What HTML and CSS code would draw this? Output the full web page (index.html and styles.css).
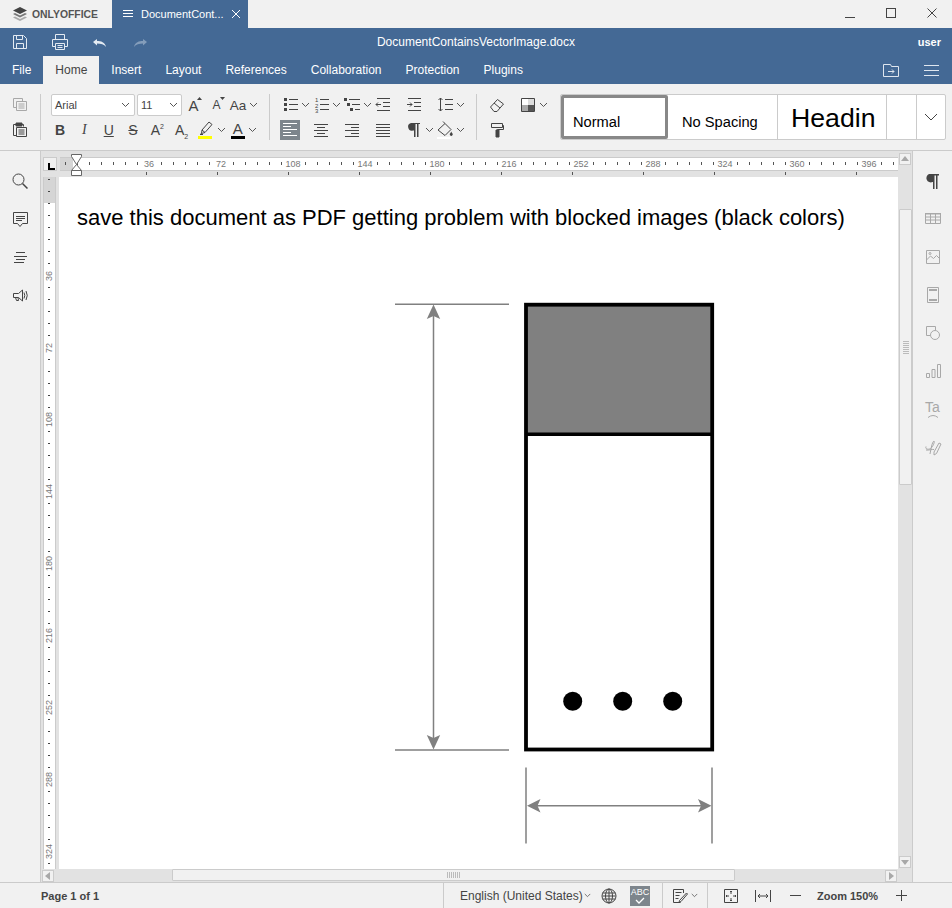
FILE: index.html
```html
<!DOCTYPE html>
<html lang="en">
<head>
    <meta charset="UTF-8">
    <meta name="viewport" content="width=device-width, initial-scale=1.0">
    <title>DocumentContainsVectorImage.docx</title>
    <link rel="stylesheet" href="styles.css">
</head>
<body>
    <svg class="sprite" aria-hidden="true">
        <symbol id="chev" viewBox="0 0 9 6"><path d="M1 1l3.5 3.5L8 1" fill="none" stroke="currentColor"/></symbol>
    </svg>

    <div class="titlebar">
        <div class="brand">
            <svg class="brand-icon" viewBox="0 0 16 16"><path d="M8 1L1 4.500 8 8l7-3.500z" fill="#444"/><path d="M3 7L1 8l7 3.500L15 8l-2-1-5 2.500z" fill="#777"/><path d="M3 10.500L1 11.500 8 15l7-3.500-2-1-5 2.500z" fill="#aaa"/></svg>
            <span class="brand-name">ONLYOFFICE</span>
        </div>
        <div class="doc-tab">
            <svg class="tab-menu" viewBox="0 0 10 8"><path d="M0 .5h10M0 3.500h10M0 6.500h10" stroke="#fff" fill="none"/></svg>
            <span class="doc-tab-name">DocumentCont...</span>
            <svg class="tab-close" viewBox="0 0 10 10"><path d="M1 1l8 8M9 1l-8 8" stroke="#fff" fill="none"/></svg>
        </div>
        <div class="window-controls">
            <svg class="win-btn" viewBox="0 0 12 12"><path d="M1 10.500h10" stroke="#444" fill="none"/></svg>
            <svg class="win-btn" viewBox="0 0 12 12"><rect x="1.500" y="1.500" width="9" height="9" stroke="#444" fill="none"/></svg>
            <svg class="win-btn" viewBox="0 0 12 12"><path d="M1.500 1.500l9 9M10.500 1.500l-9 9" stroke="#444" fill="none"/></svg>
        </div>
    </div>

    <div class="header">
        <div class="header-top">
            <div class="quick-tools">
                <svg class="quick-icon" viewBox="0 0 20 20" fill="none" stroke="#e4ebf3"><path d="M3.500 3.500h10l3 3v10h-13z"/><path d="M6.500 3.500v4h6v-4M6.500 16.500v-5h7v5"/></svg>
                <svg class="quick-icon" viewBox="0 0 20 20" fill="none" stroke="#e4ebf3"><path d="M5.500 7.500v-5h9v5M5.500 14.500h-3v-7h15v7h-3"/><path d="M5.500 11.500h9v6h-9zM7.500 13.500h5M7.500 15.500h5"/></svg>
                <svg class="quick-icon" viewBox="0 0 20 20"><path d="M3 10l4-3v2c4 0 8 1 9 6-2-3-5-3.500-9-3.500v2z" fill="#e4ebf3"/></svg>
                <svg class="quick-icon dim" viewBox="0 0 20 20"><path d="M17 10l-4-3v2c-4 0-8 1-9 6 2-3 5-3.500 9-3.500v2z" fill="#e4ebf3"/></svg>
            </div>
            <span class="doc-name">DocumentContainsVectorImage.docx</span>
            <span class="user-name">user</span>
        </div>
        <div class="header-tabs">
            <span class="tab">File</span>
            <span class="tab active">Home</span>
            <span class="tab">Insert</span>
            <span class="tab">Layout</span>
            <span class="tab">References</span>
            <span class="tab">Collaboration</span>
            <span class="tab">Protection</span>
            <span class="tab">Plugins</span>
            <div class="header-right">
                <svg class="folder-icon" viewBox="0 0 18 15" fill="none" stroke="#dfe6ef"><path d="M1.500 13.500v-12h7l1 2h7v10z"/><path d="M6 8.500h6M10 6.500l2 2-2 2"/></svg>
                <svg class="burger-icon" viewBox="0 0 15 11" fill="none" stroke="#dfe6ef"><path d="M0 .5h15M0 5.500h15M0 10.500h15"/></svg>
            </div>
        </div>
    </div>

    <div class="toolbar">
        <div class="tool-group clip-group">
            <div class="tool-row">
                <span class="tool"><svg class="ico off" viewBox="0 0 20 20" fill="none" stroke="currentColor"><path d="M6.500 12.500h-3v-9h9v3"/><path d="M6.500 6.500h10v9h-10zM8.500 9h6M8.500 11h6M8.500 13h6"/></svg></span>
            </div>
            <div class="tool-row">
                <span class="tool"><svg class="ico" viewBox="0 0 20 20" fill="none" stroke="currentColor"><path d="M6.500 15.500h-3v-11h3M11.500 4.500h2v2"/><path d="M6 3h6v3H6z" fill="currentColor"/><path d="M6.500 7.500h10v9h-10zM8.500 10h6M8.500 12h6M8.500 14h6"/></svg></span>
            </div>
        </div>
        <div class="tool-sep"></div>

        <div class="tool-group font-group">
            <div class="tool-row font-row">
                <div class="combo combo-font"><span>Arial</span><svg class="chev"><use href="#chev"/></svg></div>
                <div class="combo combo-size"><span>11</span><svg class="chev"><use href="#chev"/></svg></div>
                <span class="tool glyph-tool size-up">A<svg class="mini-arrow" viewBox="0 0 5 3"><path d="M2.500 0L5 3H0z"/></svg></span>
                <span class="tool glyph-tool size-down">A<svg class="mini-arrow" viewBox="0 0 5 3"><path d="M0 0h5L2.500 3z"/></svg></span>
                <span class="tool glyph-tool case-tool">Aa</span>
                <svg class="chev wide"><use href="#chev"/></svg>
            </div>
            <div class="tool-row style-row">
                <span class="tool text-btn bold">B</span>
                <span class="tool text-btn italic">I</span>
                <span class="tool text-btn under">U</span>
                <span class="tool text-btn strike">S</span>
                <span class="tool text-btn"><span>A<sup>2</sup></span></span>
                <span class="tool text-btn"><span>A<sub>2</sub></span></span>
                <span class="tool">
                    <svg class="ico" viewBox="0 0 20 20" fill="none" stroke="currentColor"><path d="M6 10l7-8 3 2.500-7 8-3.500 1z"/><path d="M6 10l3 2.500M5.500 13.500l-1.500 1h3"/><path d="M2 16h14v3H2z" fill="#ffff00" stroke="none"/></svg>
                </span>
                <svg class="chev narrow"><use href="#chev"/></svg>
                <span class="tool color-btn">A</span>
                <svg class="chev color-chev"><use href="#chev"/></svg>
            </div>
        </div>
        <div class="tool-sep"></div>

        <div class="tool-group para-group">
            <div class="tool-row">
                <span class="cell"><span class="icon-box"><svg class="ico" viewBox="0 0 20 20" fill="none" stroke="currentColor"><path d="M9 4.500h9M9 9.500h9M9 14.500h9"/><path d="M4 3h3v3H4zM4 8h3v3H4zM4 13h3v3H4z" fill="currentColor" stroke="none"/></svg></span><svg class="chev wide"><use href="#chev"/></svg></span>
                <span class="cell"><span class="icon-box"><svg class="ico" viewBox="0 0 20 20" fill="none" stroke="currentColor"><path d="M9 4.500h9M9 9.500h9M9 14.500h9"/><g class="list-digits"><text x="4" y="7">1</text><text x="4" y="12.500">2</text><text x="4" y="18">3</text></g></svg></span><svg class="chev wide"><use href="#chev"/></svg></span>
                <span class="cell"><span class="icon-box"><svg class="ico" viewBox="0 0 20 20" fill="none" stroke="currentColor"><path d="M7 4.500h11M10 9.500h8M13 14.500h5"/><path d="M2 3h3v3H2zM5 8h3v3H5zM8 13h3v3H8z" fill="currentColor" stroke="none"/></svg></span><svg class="chev wide"><use href="#chev"/></svg></span>
                <span class="cell"><span class="icon-box"><svg class="ico" viewBox="0 0 20 20" fill="none" stroke="currentColor"><path d="M4 3.500h13M10 7.500h7M10 11.500h7M4 15.500h13M8 9.500H3M5 7.500l-2 2 2 2"/></svg></span></span>
                <span class="cell"><span class="icon-box"><svg class="ico" viewBox="0 0 20 20" fill="none" stroke="currentColor"><path d="M4 3.500h13M10 7.500h7M10 11.500h7M4 15.500h13M3 9.500h5M6 7.500l2 2-2 2"/></svg></span></span>
                <span class="cell"><span class="icon-box"><svg class="ico" viewBox="0 0 20 20" fill="none" stroke="currentColor"><path d="M10 4.500h8M10 9.500h8M10 14.500h8M5.500 3v13M3.500 5l2-2 2 2M3.500 14l2 2 2-2"/></svg></span><svg class="chev wide"><use href="#chev"/></svg></span>
            </div>
            <div class="tool-row">
                <span class="cell"><span class="icon-box is-on"><svg class="ico" viewBox="0 0 20 20" fill="none" stroke="#fff"><path d="M3 3.500h14M3 6.500h8M3 9.500h14M3 12.500h8M3 15.500h14"/></svg></span></span>
                <span class="cell"><span class="icon-box"><svg class="ico" viewBox="0 0 20 20" fill="none" stroke="currentColor"><path d="M3 4.500h14M6 7.500h8M3 10.500h14M6 13.500h8M3 16.500h14"/></svg></span></span>
                <span class="cell"><span class="icon-box"><svg class="ico" viewBox="0 0 20 20" fill="none" stroke="currentColor"><path d="M3 4.500h14M9 7.500h8M3 10.500h14M9 13.500h8M3 16.500h14"/></svg></span></span>
                <span class="cell"><span class="icon-box"><svg class="ico" viewBox="0 0 20 20" fill="none" stroke="currentColor"><path d="M3 4.500h14M3 7.500h14M3 10.500h14M3 13.500h14M3 16.500h14"/></svg></span></span>
                <span class="cell"><span class="icon-box"><svg class="ico" viewBox="0 0 20 20"><path d="M7 3h9v1h-1.500v13h-1.500V4h-1.500v13H10v-6.500H9a3.750 3.750 0 0 1-2-7.500z" fill="currentColor"/></svg></span><svg class="chev wide"><use href="#chev"/></svg></span>
                <span class="cell"><span class="icon-box"><svg class="ico" viewBox="0 0 20 20" fill="none" stroke="currentColor"><path d="M3 10l7-6.500 6 6-6 6z"/><path d="M8 1.500l2 2"/><path d="M15.500 13a1.500 1.500 0 1 0 1.500 0l-.75-1.500z" fill="currentColor" stroke="none"/><path d="M2 18h14" stroke="#fff" stroke-width="2"/></svg></span><svg class="chev wide"><use href="#chev"/></svg></span>
            </div>
        </div>
        <div class="tool-sep"></div>

        <div class="tool-group misc-group">
            <div class="tool-row">
                <span class="icon-box"><svg class="ico" viewBox="0 0 20 20" fill="none" stroke="currentColor"><path d="M3.500 12l7-7.500 6 4.500-6.500 7.500H7z"/><path d="M7 8l6 5"/></svg></span>
                <span class="icon-box scheme"><svg class="ico" viewBox="0 0 20 20"><path d="M3.500 3.500h13v13h-13z" fill="#fff" stroke="#444"/><path d="M4 10h6v6H4z" fill="#aaa"/><path d="M10 10h6v6h-6z" fill="#555"/><path d="M10 4h6v6h-6z" fill="#ddd"/></svg></span>
                <svg class="chev wide"><use href="#chev"/></svg>
            </div>
            <div class="tool-row">
                <span class="icon-box"><svg class="ico" viewBox="0 0 20 20" fill="none" stroke="currentColor"><path d="M4.500 3.500h11v4h-11zM15.500 5.500h1v4h-6v1"/><path d="M9 10h3v7H9z" fill="currentColor"/></svg></span>
            </div>
        </div>

        <div class="style-gallery">
            <div class="style-item selected"><span class="style-normal">Normal</span></div>
            <div class="style-item spacing"><span class="style-normal">No Spacing</span></div>
            <div class="style-item heading"><span class="style-heading">Headin</span></div>
            <div class="style-item blank"></div>
            <div class="style-more"><svg viewBox="0 0 14 8"><path d="M1 1l6 6 6-6" fill="none" stroke="#444"/></svg></div>
        </div>
    </div>

    <div class="main">
        <div class="left-menu">
            <span class="side-btn"><svg viewBox="0 0 20 20" fill="none" stroke="#444"><circle cx="8.500" cy="8.500" r="5.500"/><path d="M12.500 12.500l5 5" stroke-width="1.500"/></svg></span>
            <span class="side-btn"><svg viewBox="0 0 20 20" fill="none" stroke="#444"><path d="M3.500 3.500h14v11h-5l-2.500 3-2.500-3h-4z"/><path d="M6 7.500h9M6 9.500h9M6 11.500h6"/></svg></span>
            <span class="side-btn"><svg viewBox="0 0 20 20" fill="none" stroke="#444"><path d="M6 5.500h9M4 9.500h13M6 12.500h9M4 15.500h10"/></svg></span>
            <span class="side-btn"><svg viewBox="0 0 20 20" fill="none" stroke="#444"><path d="M3.500 8.500h5l4-3.500v11l-4-3.500h-5zM5.500 12.500l1 3h2l-.5-3"/><path d="M14 7.500q1.500 3 0 6M16 6q2.500 4.500 0 9"/></svg></span>
        </div>

        <div class="workspace">
            <div class="doc-col">
                <div class="ruler-row">
                    <div class="tab-stop"></div>
                    <div class="ruler-h">
                        <div class="ruler-h-margin"></div>
                        <div class="ruler-h-labels">
                            <span class="ruler-label"><b>36</b></span>
                            <span class="ruler-label"><b>72</b></span>
                            <span class="ruler-label"><b>108</b></span>
                            <span class="ruler-label"><b>144</b></span>
                            <span class="ruler-label"><b>180</b></span>
                            <span class="ruler-label"><b>216</b></span>
                            <span class="ruler-label"><b>252</b></span>
                            <span class="ruler-label"><b>288</b></span>
                            <span class="ruler-label"><b>324</b></span>
                            <span class="ruler-label"><b>360</b></span>
                            <span class="ruler-label"><b>396</b></span>
                        </div>
                    </div>
                    <svg class="indent-marker" viewBox="0 0 11 22"><path d="M.5.5h10v2L5.500 10.500l5 6v5H.5v-5l5-6-5-8z" fill="#fff" stroke="#666"/><path d="M.5 16.500h10" stroke="#666"/></svg>
                </div>
                <div class="doc-row">
                    <div class="ruler-v">
                        <div class="ruler-v-margin"></div>
                        <span class="ruler-v-label"><b>36</b></span>
                        <span class="ruler-v-label"><b>72</b></span>
                        <span class="ruler-v-label"><b>108</b></span>
                        <span class="ruler-v-label"><b>144</b></span>
                        <span class="ruler-v-label"><b>180</b></span>
                        <span class="ruler-v-label"><b>216</b></span>
                        <span class="ruler-v-label"><b>252</b></span>
                        <span class="ruler-v-label"><b>288</b></span>
                        <span class="ruler-v-label"><b>324</b></span>
                    </div>
                    <div class="page">
                        <p class="page-text">save this document as PDF getting problem with blocked images (black colors)</p>
                        <svg class="page-figure" viewBox="390 300 330 550">
                            <g fill="none" stroke="#808080" stroke-width="1.500">
                                <path d="M395 304.200h114M395 750h114M433.500 312v430"/>
                                <path d="M526 767.500v76M712 767.500v76M535 805.700h168"/>
                            </g>
                            <g fill="#808080">
                                <path d="M433.500 304.500l6.700 14.500-6.700-3-6.700 3z"/>
                                <path d="M433.500 749.500l6.700-14.500-6.700 3-6.700-3z"/>
                                <path d="M527 805.700l13.500-6.700-3 6.700 3 6.700z"/>
                                <path d="M711.500 805.700l-13.500-6.700 3 6.700-3 6.700z"/>
                            </g>
                            <rect x="526" y="304.700" width="186.200" height="129.300" fill="#808080"/>
                            <rect x="526" y="304.700" width="186.200" height="444.800" fill="none" stroke="#000" stroke-width="3.800"/>
                            <path d="M526 434.200h186.200" stroke="#000" stroke-width="3.400"/>
                            <circle cx="572.700" cy="701.300" r="9.500"/>
                            <circle cx="622.700" cy="701.300" r="9.500"/>
                            <circle cx="672.700" cy="701.300" r="9.500"/>
                        </svg>
                    </div>
                </div>
                <div class="hscroll">
                    <span class="scroll-btn"><svg viewBox="0 0 6 8"><path d="M5 0v8L0 4z"/></svg></span>
                    <div class="hscroll-track">
                        <div class="hscroll-thumb"></div>
                    </div>
                    <span class="scroll-btn"><svg viewBox="0 0 6 8"><path d="M1 0v8l5-4z"/></svg></span>
                </div>
            </div>
            <div class="vscroll">
                <span class="scroll-btn"><svg viewBox="0 0 8 6"><path d="M0 5h8L4 0z"/></svg></span>
                <div class="vscroll-track">
                    <div class="vscroll-thumb"></div>
                </div>
                <span class="scroll-btn"><svg viewBox="0 0 8 6"><path d="M0 1h8L4 6z"/></svg></span>
            </div>
        </div>

        <div class="right-menu">
            <span class="side-btn"><svg viewBox="0 0 20 20"><path d="M6 3h10v1.500h-1.500V18H13V4.500h-1.500V18H10v-7H9.500a4 4 0 0 1-3.500-8z" fill="#444"/></svg></span>
            <span class="side-btn"><svg viewBox="0 0 20 20" fill="none" stroke="#a8a8a8"><path d="M2.500 4.500h15v10h-15zM2.500 8h15M2.500 11h15M7.500 5v9.500M12.500 5v9.500"/><path d="M2 4h16v1.500H2z" fill="#a8a8a8" stroke="none"/></svg></span>
            <span class="side-btn"><svg viewBox="0 0 20 20" fill="none" stroke="#a8a8a8"><path d="M3.500 3.500h13v13h-13zM3.500 13l4-4 3 2.500 3-3 3 3"/><circle cx="7" cy="6.500" r="1"/></svg></span>
            <span class="side-btn"><svg viewBox="0 0 20 20" fill="none" stroke="#a8a8a8"><path d="M4.500 2.500h11v15h-11z"/><path d="M6 4h8v2H6zM6 14h8v2H6z" fill="#a8a8a8" stroke="none"/></svg></span>
            <span class="side-btn"><svg viewBox="0 0 20 20" fill="none" stroke="#a8a8a8"><path d="M7 12.500H3.500v-9h9V7"/><circle cx="12" cy="12" r="4.500"/></svg></span>
            <span class="side-btn"><svg viewBox="0 0 20 20" fill="none" stroke="#a8a8a8"><path d="M3.500 12.500h3v4h-3zM9 8.500h3v8H9zM14.500 3.500h3v13h-3z"/></svg></span>
            <span class="side-btn side-art"><span class="art-ta">Ta</span><svg viewBox="0 0 12 4" fill="none" stroke="#a8a8a8"><path d="M1 3.500q5-4 10 0"/></svg></span>
            <span class="side-btn"><svg viewBox="0 0 20 20" fill="none" stroke="#a8a8a8"><path d="M7 17c1-5 2-12 4-13 1 .5-1 6-3.500 7.500S2 12 3 9.500M3 13c3 .5 6-1 8-.5"/><path d="M11 15l5-9 2 1-4.500 9.500-2.500 1.500z"/></svg></span>
        </div>
    </div>

    <div class="statusbar">
        <span class="page-count">Page 1 of 1</span>
        <div class="status-sep lang-sep"></div>
        <span class="lang-name">English (United States)</span>
        <svg class="chev status-chev"><use href="#chev"/></svg>
        <svg class="status-icon globe" viewBox="0 0 16 16" fill="none" stroke="#444"><circle cx="8" cy="8" r="7"/><ellipse cx="8" cy="8" rx="3.500" ry="7"/><path d="M8 1v14M1.500 5h13M1.500 8h13M1.500 11h13"/></svg>
        <span class="spell-btn">
            <span class="spell-text">ABC</span>
            <svg viewBox="0 0 10 7" fill="none" stroke="#fff" stroke-width="1.300"><path d="M1 3l3 3 5-5"/></svg>
        </span>
        <div class="status-sep track-sep"></div>
        <svg class="status-icon track" viewBox="0 0 16 16" fill="none" stroke="#444"><path d="M11.500 5V1.500h-10v13h7M3.500 4.500h6M3.500 7.500h4M3.500 10.500h3"/><path d="M7.500 12.500l7-7.500 1 1-6.500 7.500-2 1z"/></svg>
        <svg class="chev status-chev track-chev"><use href="#chev"/></svg>
        <div class="status-sep zoom-sep"></div>
        <svg class="status-icon fit-page" viewBox="0 0 14 14" fill="none" stroke="#444"><path d="M.5.5h13v13H.5z"/><path d="M7 2v3M7 9v3M2 7h3M9 7h3M6 3l1-1 1 1M6 11l1 1 1-1M3 6L2 7l1 1M11 6l1 1-1 1"/></svg>
        <svg class="status-icon fit-width" viewBox="0 0 16 12" fill="none" stroke="#444"><path d="M.5 0v12M15.500 0v12M3 6h10M5 4L3 6l2 2M11 4l2 2-2 2"/></svg>
        <span class="zoom-minus"></span>
        <span class="zoom-label">Zoom 150%</span>
        <span class="zoom-plus"></span>
    </div>
</body>
</html>
```

FILE: styles.css
```css
* {
    margin: 0;
    padding: 0;
    box-sizing: border-box;
}

body {
    font-family: 'Liberation Sans', Arial, sans-serif;
    font-size: 12px;
    color: #444;
    background: #f1f1f1;
    height: 908px;
    display: flex;
    flex-direction: column;
    overflow: hidden;
}

.sprite {
    display: none;
}

/* title bar */
.titlebar {
    height: 28px;
    display: flex;
    flex-shrink: 0;
}

.brand {
    width: 112px;
    display: flex;
    align-items: center;
    padding-left: 12px;
}

.brand-icon {
    width: 16px;
    height: 16px;
}

.brand-name {
    margin-left: 4px;
    font-size: 10.4px;
    font-weight: bold;
    color: #555;
}

.doc-tab {
    width: 136px;
    background: #446995;
    color: #fff;
    display: flex;
    align-items: center;
    padding-left: 11px;
}

.tab-menu {
    width: 10px;
    height: 8px;
}

.doc-tab-name {
    margin-left: 8px;
    width: 81px;
    font-size: 11px;
    white-space: nowrap;
}

.tab-close {
    margin-left: 9px;
    width: 10px;
    height: 10px;
}

.window-controls {
    margin-left: auto;
    display: flex;
    padding: 7px 14px 0 0;
    gap: 29px;
}

.win-btn {
    width: 12px;
    height: 12px;
}

/* blue header */
.header {
    height: 56px;
    background: #446995;
    color: #fff;
    flex-shrink: 0;
}

.header-top {
    height: 28px;
    position: relative;
    display: flex;
    align-items: center;
    justify-content: center;
}

.quick-tools {
    position: absolute;
    left: 10px;
    top: 4px;
    display: flex;
    gap: 20px;
}

.quick-icon {
    width: 20px;
    height: 20px;
}

.quick-icon.dim {
    opacity: 0.4;
}

.user-name {
    position: absolute;
    right: 11px;
    font-size: 11px;
    font-weight: bold;
}

.header-tabs {
    height: 28px;
    display: flex;
    align-items: stretch;
}

.tab {
    padding: 0 12px;
    line-height: 28px;
}

.tab.active {
    background: #f1f1f1;
    color: #444;
}

.header-right {
    margin-left: auto;
    display: flex;
    align-items: center;
    padding-right: 13px;
    gap: 24px;
}

.folder-icon {
    width: 18px;
    height: 15px;
}

.burger-icon {
    width: 15px;
    height: 11px;
}

/* toolbar */
.toolbar {
    height: 67px;
    flex-shrink: 0;
    display: flex;
    padding-top: 10px;
    border-bottom: 1px solid #cbcbcb;
}

.tool-group {
    display: flex;
    flex-direction: column;
    gap: 3px;
}

.tool-row {
    height: 22px;
    display: flex;
    align-items: center;
}

.tool-sep {
    width: 1px;
    height: 46px;
    background: #cbcbcb;
}

.clip-group {
    width: 40px;
    padding-left: 8px;
}

.tool {
    width: 24px;
    height: 22px;
    display: flex;
    align-items: center;
    justify-content: center;
    position: relative;
}

.ico {
    width: 20px;
    height: 20px;
    color: #444;
}

.ico.off {
    color: #a8a8a8;
}

.list-digits {
    font-size: 6px;
    fill: #444;
    stroke: none;
}

.chev {
    width: 9px;
    height: 6px;
    color: #555;
    flex-shrink: 0;
}

.chev.wide {
    margin: 0 1px;
}

.chev.narrow {
    margin-left: -1px;
}

.chev.color-chev {
    margin-left: 3.5px;
}

.font-group {
    width: 228px;
}

.font-row {
    padding-left: 10px;
}

.style-row {
    padding-left: 7px;
}

.combo {
    height: 22px;
    background: #fff;
    border: 1px solid #cbcbcb;
    border-radius: 2px;
    display: flex;
    align-items: center;
    justify-content: space-between;
    padding: 0 4px 0 3px;
    font-size: 11px;
}

.combo-font {
    width: 84px;
    margin-right: 2px;
}

.combo-size {
    width: 45px;
    padding-right: 3px;
}

.glyph-tool {
    width: 23px;
    font-size: 15px;
}

.case-tool {
    width: 20px;
    font-size: 13.500px;
}

.size-up {
    font-size: 15px;
}

.size-down {
    font-size: 12px;
}

.mini-arrow {
    position: absolute;
    right: 3px;
    top: 3px;
    width: 5px;
    height: 3px;
    fill: #444;
}

.text-btn {
    width: 24.3px;
    font-size: 14px;
}

.bold {
    font-weight: bold;
}

.italic {
    font-family: 'Liberation Serif', serif;
    font-style: italic;
}

.under {
    text-decoration: underline;
}

.strike {
    text-decoration: line-through;
}

.text-btn sup,
.text-btn sub {
    font-size: 7px;
    line-height: 0;
}

.color-btn {
    width: 14px;
    height: 18px;
    margin-left: 5px;
    font-size: 15px;
    line-height: 15px;
    border-bottom: 3px solid #000;
}

.para-group {
    width: 206px;
    padding-left: 10px;
}

.cell {
    width: 31px;
    display: flex;
    align-items: center;
}

.icon-box {
    width: 20px;
    height: 20px;
    display: flex;
    flex-shrink: 0;
}

.icon-box.is-on {
    background: #7d858c;
}

.misc-group {
    padding-left: 10px;
    width: 83px;
}

.misc-group .scheme {
    margin-left: 11px;
}

.style-gallery {
    width: 386px;
    height: 46px;
    background: #fff;
    border: 1px solid #cbcbcb;
    border-radius: 2px;
    display: flex;
    color: #000;
}

.style-item {
    width: 109px;
    display: flex;
    align-items: flex-end;
    padding: 0 0 8px 12px;
    border-right: 1px solid #cbcbcb;
    overflow: hidden;
}

.style-item.selected {
    width: 107px;
    border: 3px solid #888;
    border-radius: 2px;
    padding: 0 0 5px 9px;
}

.style-item.spacing {
    width: 110px;
    padding-left: 14px;
}

.style-item.heading {
    padding-bottom: 6px;
    padding-left: 13px;
}

.style-item.blank {
    width: 30px;
}

.style-normal {
    font-size: 14.67px;
    line-height: 17px;
}

.style-heading {
    font-size: 26.67px;
    line-height: 30px;
}

.style-more {
    flex: 1;
    display: flex;
    align-items: center;
    justify-content: center;
}

.style-more svg {
    width: 14px;
    height: 8px;
}

/* main area */
.main {
    flex: 1;
    display: flex;
    min-height: 0;
}

.left-menu {
    width: 41px;
    border-right: 1px solid #cbcbcb;
    padding-top: 11px;
    flex-shrink: 0;
}

.right-menu {
    width: 40px;
    border-left: 1px solid #cbcbcb;
    padding-top: 11px;
    flex-shrink: 0;
}

.side-btn {
    height: 38px;
    display: flex;
    flex-direction: column;
    align-items: center;
    justify-content: center;
}

.side-btn svg {
    width: 20px;
    height: 20px;
}

.side-art svg {
    width: 12px;
    height: 4px;
}

.art-ta {
    font-size: 14px;
    line-height: 14px;
    color: #a8a8a8;
}

.workspace {
    flex: 1;
    display: flex;
    min-width: 0;
    background: #e2e2e2;
}

.doc-col {
    flex: 1;
    display: flex;
    flex-direction: column;
    min-width: 0;
}

.ruler-row {
    height: 26px;
    flex-shrink: 0;
    position: relative;
    display: flex;
    padding: 6px 0 0 2px;
    align-items: flex-start;
    background: linear-gradient(to right, #555 1px, transparent 1px) 105px 21px / 71px 3px repeat-x;
}

.tab-stop {
    width: 14px;
    height: 14px;
    margin-right: 3px;
    background: #f1f1f1;
    border: 1px solid #cbcbcb;
    position: relative;
}

.tab-stop::before {
    content: "";
    position: absolute;
    left: 4px;
    top: 5px;
    width: 5px;
    height: 5px;
    border-left: 2px solid #000;
    border-bottom: 2px solid #000;
}

.ruler-h {
    flex: 1;
    height: 14px;
    background: #fff linear-gradient(to right, #555 1px, transparent 1px) 5px 4px / 12px 3px repeat-x;
    border-top: 1px solid #cbcbcb;
    border-bottom: 1px solid #cbcbcb;
    position: relative;
    overflow: hidden;
}

.ruler-h-margin {
    position: absolute;
    left: 0;
    top: 0;
    width: 13px;
    height: 12px;
    background: #d5d5d5 linear-gradient(to right, #555 1px, transparent 1px) 5px 4px / 12px 3px repeat-x;
}

.ruler-h-labels {
    display: flex;
    padding-left: 53px;
}

.ruler-label {
    width: 72px;
    flex-shrink: 0;
    text-align: center;
    font-size: 9px;
    line-height: 12px;
    color: #777;
}

.ruler-label b {
    font-weight: normal;
    background: #fff;
    padding: 0 1px;
}

.indent-marker {
    position: absolute;
    left: 30px;
    top: 3px;
    width: 11px;
    height: 22px;
}

.doc-row {
    flex: 1;
    display: flex;
    min-height: 0;
    padding-left: 2px;
}

.ruler-v {
    width: 13px;
    margin-right: 3px;
    background: #fff linear-gradient(#444 1px, transparent 1px) 4px 2px / 2px 12px repeat-y;
    border-left: 1px solid #cbcbcb;
    border-right: 1px solid #cbcbcb;
    position: relative;
    overflow: hidden;
    padding-top: 63px;
    display: flex;
    flex-direction: column;
    flex-shrink: 0;
}

.ruler-v-margin {
    position: absolute;
    left: 0;
    top: 0;
    width: 11px;
    height: 26px;
    background: #d5d5d5 linear-gradient(#444 1px, transparent 1px) 4px 2px / 2px 12px repeat-y;
}

.ruler-v-label {
    height: 72px;
    flex-shrink: 0;
    display: flex;
    align-items: center;
    justify-content: center;
    font-size: 9px;
    color: #777;
}

.ruler-v-label b {
    font-weight: normal;
    background: #fff;
    writing-mode: vertical-rl;
    transform: rotate(180deg);
    padding: 1px 0;
    line-height: 11px;
}

.page {
    flex: 1;
    background: #fff;
    overflow: hidden;
}

.page-text {
    padding: 28px 0 0 18px;
    font-size: 22px;
    line-height: 26px;
    color: #000;
    white-space: nowrap;
}

.page-figure {
    display: block;
    width: 330px;
    height: 550px;
    margin: 69px 0 0 331px;
}

.hscroll {
    height: 13px;
    flex-shrink: 0;
    display: flex;
    align-items: center;
    padding: 0 1px;
}

.hscroll-track {
    flex: 1;
    height: 13px;
    padding-left: 118px;
    padding-right: 150px;
}

.hscroll-thumb {
    height: 12px;
    background: #f1f1f1 repeating-linear-gradient(to right, #bbb 0 1px, transparent 1px 2px) center / 13px 6px no-repeat;
    border: 1px solid #cbcbcb;
    border-radius: 1px;
}

.scroll-btn {
    width: 12px;
    height: 12px;
    background: #f1f1f1;
    border: 1px solid #cbcbcb;
    display: flex;
    align-items: center;
    justify-content: center;
    flex-shrink: 0;
}

.scroll-btn svg {
    width: 6px;
    height: 8px;
    fill: #a8a8a8;
}

.vscroll .scroll-btn svg {
    width: 8px;
    height: 6px;
}

.vscroll {
    width: 14px;
    flex-shrink: 0;
    display: flex;
    flex-direction: column;
    align-items: flex-start;
    padding: 2px 0 14px 1px;
}

.vscroll-track {
    flex: 1;
    width: 13px;
    padding-top: 44px;
}

.vscroll-thumb {
    height: 276px;
    background: #f1f1f1 repeating-linear-gradient(#bbb 0 1px, transparent 1px 2px) center / 6px 13px no-repeat;
    border: 1px solid #cbcbcb;
    border-radius: 1px;
}

/* status bar */
.statusbar {
    height: 26px;
    flex-shrink: 0;
    display: flex;
    align-items: center;
    border-top: 1px solid #cbcbcb;
    position: relative;
    padding-left: 41px;
}

.page-count {
    width: 402px;
    font-size: 11px;
    font-weight: bold;
}

.status-sep {
    width: 1px;
    height: 25px;
    background: #cbcbcb;
    flex-shrink: 0;
}

.lang-name {
    margin-left: 16px;
    width: 124px;
    white-space: nowrap;
}

.status-chev {
    width: 7px;
    height: 5px;
}

.status-icon {
    flex-shrink: 0;
}

.globe {
    margin-left: 10px;
    width: 16px;
    height: 16px;
}

.spell-btn {
    margin-left: 13px;
    width: 20px;
    height: 20px;
    background: #7d858c;
    color: #fff;
    display: flex;
    flex-direction: column;
    align-items: center;
    padding-top: 1px;
}

.spell-text {
    font-size: 9px;
    line-height: 10px;
}

.spell-btn svg {
    width: 10px;
    height: 7px;
}

.track-sep {
    margin-left: 12px;
}

.track {
    margin-left: 9px;
    width: 16px;
    height: 16px;
}

.track-chev {
    margin-left: 3px;
}

.zoom-sep {
    margin-left: 9px;
}

.fit-page {
    margin-left: 16px;
    width: 14px;
    height: 14px;
}

.fit-width {
    margin-left: 17px;
    width: 16px;
    height: 12px;
}

.zoom-minus {
    margin-left: 19px;
    width: 11px;
    height: 1px;
    background: #444;
}

.zoom-label {
    margin-left: 16px;
    width: 79px;
    font-size: 11px;
    font-weight: bold;
    white-space: nowrap;
}

.zoom-plus {
    width: 11px;
    height: 11px;
    background: linear-gradient(#444, #444) center / 11px 1px no-repeat, linear-gradient(#444, #444) center / 1px 11px no-repeat;
}
```
